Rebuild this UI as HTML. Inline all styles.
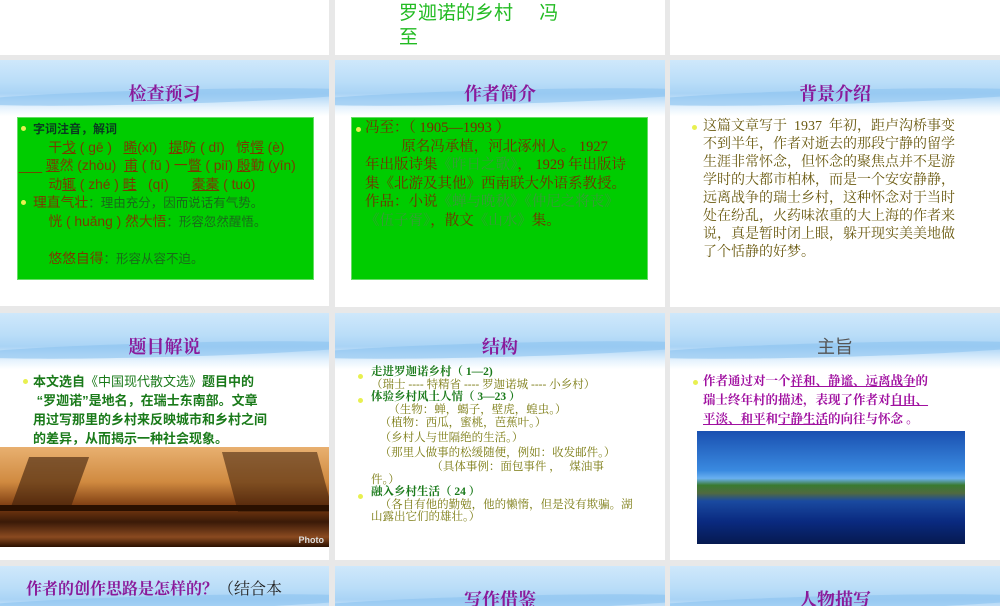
<!DOCTYPE html>
<html><head><meta charset="utf-8"><style>
*{margin:0;padding:0;box-sizing:border-box}
body{width:1000px;height:600px;background:#e8e8e8;position:relative;overflow:hidden;font-family:"Liberation Sans","Noto Sans CJK SC",sans-serif}
.s{position:absolute;background:#fff;overflow:hidden}
.ban{position:absolute;left:0;top:0;width:100%;height:56px;background:linear-gradient(180deg,#cfe8fb 0%,#b9ddf8 40%,#a9d3f5 60%,#e6f3fd 85%,#fff 100%)}
.ban:after{content:"";position:absolute;left:-10%;top:30px;width:120%;height:14px;background:rgba(140,195,240,.6);transform:rotate(-1.5deg);border-radius:50%}
.t{position:absolute;left:0;width:100%;top:20px;text-align:center;font-size:18px;font-weight:bold;color:#8a1a9a;font-family:"Liberation Serif","Noto Serif CJK SC",serif}
.g{position:absolute;background:#00cc00;border:1px solid #66dd66}
.b{position:absolute;width:5px;height:5px;border-radius:50%;background:#e8f050}
p{position:absolute;white-space:nowrap}
</style></head><body>
<div class="s" style="left:0;top:0;width:329px;height:55px"></div>
<div class="s" style="left:335px;top:0;width:330px;height:55px"><p style="left:64px;top:2px;font-size:19px;line-height:24px;color:#22bb22">罗迦诺的乡村&nbsp;&nbsp;&nbsp;&nbsp;&nbsp;冯<br>至</p></div>
<div class="s" style="left:670px;top:0;width:330px;height:55px"></div>

<div class="s" style="left:0;top:60px;width:329px;height:246px"><div class="ban"></div><div class="t">检查预习</div>
<div class="g" style="left:17px;top:57px;width:297px;height:163px"></div>
<div class="b" style="left:21px;top:66px"></div>
<p style="left:33px;top:60px;font-size:13.8px;line-height:18.5px;color:#7a3a00"><b style="color:#0a3a20;font-size:12px">字词注音，解词</b><br>&nbsp;&nbsp;&nbsp;&nbsp;干<u>戈</u> ( gē )&nbsp;&nbsp; <u>晞</u>(xī)&nbsp;&nbsp; <u>提</u>防 ( dī)&nbsp;&nbsp; 惊<u>愕</u> (è)<br><span style="margin-left:-14px">___ <u>骤</u>然 (zhòu)&nbsp; <u>甫</u> ( fǔ ) 一<u>瞥</u> ( piī) <u>殷</u>勤 (yīn)</span><br>&nbsp;&nbsp;&nbsp;&nbsp;动<u>辄</u> ( zhé ) <u>畦</u>&nbsp;&nbsp; (qí)&nbsp;&nbsp;&nbsp;&nbsp;&nbsp; <u>橐橐</u> ( tuó)<br>理直气壮<span style="color:#1a6a1a;font-size:12.5px">：理由充分，因而说话有气势。</span><br>&nbsp;&nbsp;&nbsp;&nbsp;恍 ( huǎng ) 然大悟<span style="color:#1a6a1a;font-size:12.5px">：形容忽然醒悟。</span><br><br>&nbsp;&nbsp;&nbsp;&nbsp;悠悠自得<span style="color:#1a6a1a;font-size:12.5px">：形容从容不迫。</span></p>
<div class="b" style="left:21px;top:140px"></div></div>

<div class="s" style="left:335px;top:60px;width:330px;height:247px"><div class="ban"></div><div class="t">作者简介</div>
<div class="g" style="left:16px;top:57px;width:297px;height:163px"></div>
<div class="b" style="left:21px;top:67px"></div>
<p style="left:30px;top:59px;font-size:14.5px;line-height:18.5px;color:#7a2a00;font-family:'Liberation Serif','Noto Serif CJK SC',serif">冯至：（ 1905—1993 ）<br>&nbsp;&nbsp;&nbsp;&nbsp;&nbsp;&nbsp;&nbsp;&nbsp;&nbsp;&nbsp;原名冯承植，河北涿州人。 1927<br>年出版诗集<span style="color:#3a9a3a">《昨日之歌》</span>， 1929 年出版诗<br>集《北游及其他》西南联大外语系教授。<br>作品：小说<span style="color:#3a9a3a">《蝉与晚秋》《仲尼之将丧》</span><br><span style="color:#3a9a3a">《伍子胥》</span>，散文<span style="color:#3a9a3a">《山水》</span>集。</p></div>

<div class="s" style="left:670px;top:60px;width:330px;height:247px"><div class="ban"></div><div class="t">背景介绍</div>
<div class="b" style="left:22px;top:65px"></div>
<p style="left:33px;top:58px;font-size:14px;line-height:18px;color:#6a5a10;font-family:'Liberation Serif','Noto Serif CJK SC',serif">这篇文章写于&nbsp; 1937&nbsp; 年初，距卢沟桥事变<br>不到半年，作者对逝去的那段宁静的留学<br>生涯非常怀念，但怀念的聚焦点并不是游<br>学时的大都市柏林，而是一个安安静静，<br>远离战争的瑞士乡村，这种怀念对于当时<br>处在纷乱，火药味浓重的大上海的作者来<br>说，真是暂时闭上眼，躲开现实美美地做<br>了个恬静的好梦。</p></div>

<div class="s" style="left:0;top:313px;width:329px;height:247px"><div class="ban"></div><div class="t">题目解说</div>
<div class="b" style="left:23px;top:66px"></div>
<p style="left:33px;top:59px;font-size:13px;line-height:19px;color:#1a7a1a;font-weight:bold">本文选自<span style="font-weight:normal">《中国现代散文选》</span>题目中的<br>&nbsp;“罗迦诺”是地名，在瑞士东南部。文章<br>用过写那里的乡村来反映城市和乡村之间<br>的差异，从而揭示一种社会现象。</p>
<div style="position:absolute;left:0;top:134px;width:330px;height:100px;background:linear-gradient(180deg,#e8b070 0%,#d08a40 35%,#7a3a10 60%,#3a1a08 75%,#8a4a20 90%,#2a1000 100%)">
<div style="position:absolute;left:20px;top:10px;width:60px;height:50px;background:rgba(60,30,10,.6);transform:skewX(-20deg)"></div>
<div style="position:absolute;left:230px;top:5px;width:95px;height:60px;background:rgba(60,30,10,.55);transform:skewX(15deg)"></div>
<div style="position:absolute;left:0;top:58px;width:330px;height:6px;background:#2a1000"></div>
<p style="right:6px;bottom:2px;font-size:9px;color:#ddd;font-weight:bold">Photo</p></div></div>

<div class="s" style="left:335px;top:313px;width:330px;height:247px"><div class="ban"></div><div class="t">结构</div>
<div class="b" style="left:23px;top:61px"></div><div class="b" style="left:23px;top:85px"></div><div class="b" style="left:23px;top:181px"></div>
<p style="left:36px;top:53px;font-size:11.5px;line-height:12.5px;color:#7a7a10;font-family:'Liberation Serif','Noto Serif CJK SC',serif"><b style="color:#1a7a1a">走进罗迦诺乡村（ 1—2)</b><br>（瑞士 ---- 特精省 ---- 罗迦诺城 ---- 小乡村）<br><b style="color:#1a7a1a">体验乡村风土人情（ 3—23 ）</b><br>&nbsp;&nbsp;&nbsp;&nbsp;&nbsp;&nbsp;（生物：蝉，蝎子，壁虎，蝗虫。）<br><span style="line-height:15px">&nbsp;&nbsp;&nbsp;（植物：西瓜，蜜桃，芭蕉叶。）<br>&nbsp;&nbsp;&nbsp;（乡村人与世隔绝的生活。）<br>&nbsp;&nbsp;&nbsp;（那里人做事的松缓随便，例如：收发邮件。）</span><br>&nbsp;&nbsp;&nbsp;&nbsp;&nbsp;&nbsp;&nbsp;&nbsp;&nbsp;&nbsp;&nbsp;&nbsp;&nbsp;&nbsp;&nbsp;&nbsp;&nbsp;&nbsp;&nbsp;&nbsp;&nbsp;（具体事例：面包事件 ，&nbsp;&nbsp; 煤油事<br>件。）<br><b style="color:#1a7a1a">融入乡村生活（ 24 ）</b><br>&nbsp;&nbsp;&nbsp;（各自有他的勤勉，他的懒惰，但是没有欺骗。湖<br>山露出它们的雄壮。）</p></div>

<div class="s" style="left:670px;top:313px;width:330px;height:247px"><div class="ban"></div><div class="t" style="font-weight:normal;color:#555;font-family:'Liberation Sans','Noto Sans CJK SC',sans-serif">主旨</div>
<div class="b" style="left:23px;top:67px"></div>
<p style="left:33px;top:59px;font-size:12.5px;line-height:19px;color:#a010a0;font-weight:bold;font-family:'Liberation Serif','Noto Serif CJK SC',serif">作者通过对一个<u>祥和、静谧、远离战争</u>的<br>瑞士终年村的描述，表现了作者对<u>自由、</u><br><u>平淡、和平</u>和<u>宁静生活</u>的向往与怀念 。</p>
<div style="position:absolute;left:27px;top:118px;width:268px;height:113px;background:linear-gradient(180deg,#1a50b0 0%,#3a8ae0 35%,#6ab0f0 42%,#3a7a30 48%,#506a40 55%,#1a4aa0 62%,#0a2a80 80%,#061a50 100%)"></div></div>

<div class="s" style="left:0;top:566px;width:329px;height:40px"><div class="ban"></div><p style="left:26px;top:10px;font-size:16px;font-weight:bold;color:#8a1a9a;font-family:'Liberation Serif','Noto Serif CJK SC',serif">作者的创作思路是怎样的？<span style="font-weight:normal;color:#222">（结合本</span></p></div>
<div class="s" style="left:335px;top:566px;width:330px;height:40px"><div class="ban"></div><div class="t" style="top:20px">写作借鉴</div></div>
<div class="s" style="left:670px;top:566px;width:330px;height:40px"><div class="ban"></div><div class="t" style="top:20px">人物描写</div></div>
</body></html>
